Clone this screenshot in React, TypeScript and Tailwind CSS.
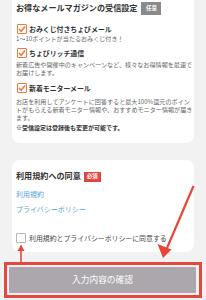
import React from "react";

const font = { fontFamily: '"Noto Sans CJK JP", "Noto Sans", sans-serif' };

function OrangeCheck() {
  return (
    <span className="flex h-[10px] w-[10px] shrink-0 items-center justify-center rounded-[1px] border border-[#f0783c] bg-white">
      <svg width="8" height="8" viewBox="0 0 8 8">
        <polyline points="1,4 3.2,6.2 7,1.6" fill="none" stroke="#f0783c" strokeWidth="1.6" />
      </svg>
    </span>
  );
}

function MailItem({ label, lines, top, gap }: { label: string; lines: string[]; top: string; gap: string }) {
  return (
    <div>
      <div className={`ml-[1px] flex h-[10px] items-center gap-[2px] ${top}`}>
        <OrangeCheck />
        <span className="text-[6.9px] font-bold leading-none text-[#333]">{label}</span>
      </div>
      <p className={`${gap} text-[6.1px] leading-[8px] text-[#666]`}>
        {lines.map((l, i) => (
          <span key={i} className="block whitespace-nowrap">
            {l}
          </span>
        ))}
      </p>
    </div>
  );
}

export default function App() {
  return (
    <div className="relative h-[300px] w-[206px] overflow-hidden bg-[#f2f2f2]" style={font}>
      {/* mail magazine card */}
      <section className="mx-[12px] rounded-b-[8px] bg-white px-[4px] pb-[11px] pt-[2px]">
        <div className="flex h-[13px] items-center gap-[4px]">
          <h2 className="text-[8.1px] font-bold leading-none text-[#333]">お得なメールマガジンの受信設定</h2>
          <span className="flex h-[13px] w-[20px] items-center justify-center bg-[#8a8a8a] text-[5.5px] font-bold text-white">
            任意
          </span>
        </div>
        <MailItem
          top="mt-[9px]"
          gap="mt-[1px]"
          label="おみくじ付きちょびメール"
          lines={["1～10ポイントが当たるおみくじ付き！"]}
        />
        <MailItem
          top="mt-[5px]"
          gap="mt-[3px]"
          label="ちょびリッチ通信"
          lines={["新着広告や開催中のキャンペーンなど、様々なお得情報を最速で", "お届けします。"]}
        />
        <MailItem
          top="mt-[6px]"
          gap="mt-[5px]"
          label="新着モニターメール"
          lines={[
            "お店を利用してアンケートに回答すると最大100%還元のポイン",
            "トがもらえる新着モニター情報や、おすすめモニター情報が届き",
            "ます。",
          ]}
        />
        <p className="mt-[2px] text-[6px] font-bold leading-[8px] text-[#333]">※受信設定は登録後も変更が可能です。</p>
      </section>

      {/* terms card */}
      <section className="mx-[12px] mt-[17px] rounded-[8px] bg-white px-[4px] pb-[9px] pt-[11px]">
        <div className="flex h-[11px] items-center gap-[3px]">
          <h2 className="text-[8.1px] font-bold leading-none text-[#333]">利用規約への同意</h2>
          <span className="flex h-[10px] w-[17px] items-center justify-center bg-[#e8423f] text-[5.5px] font-bold text-white">
            必須
          </span>
        </div>
        <a className="mt-[8px] block text-[7px] leading-[9px] text-[#5a9fd6]">利用規約</a>
        <a className="mt-[6px] block text-[7px] leading-[9px] text-[#5a9fd6]">プライバシーポリシー</a>
        <label className="mt-[19px] flex h-[10px] items-center gap-[3px]">
          <span className="h-[10px] w-[10px] shrink-0 rounded-[1px] border border-[#b5b5b5] bg-white" />
          <span className="text-[6.9px] leading-none text-[#444]">利用規約とプライバシーポリシーに同意する</span>
        </label>
      </section>

      {/* submit */}
      <button
        type="button"
        className="mx-[8px] mt-[14px] flex h-[28px] w-[189px] items-center justify-center rounded-[2px] border border-[#f4f0f2] bg-[#aba7ac] text-[8.7px] text-white"
      >
        入力内容の確認
      </button>

      {/* annotations */}
      <div className="pointer-events-none absolute left-[4px] top-[262px] h-[36px] w-[198px] border-[3px] border-[#e34a3b]" />
      <svg className="pointer-events-none absolute left-0 top-0" width="206" height="300" viewBox="0 0 206 300">
        <line x1="193.5" y1="186" x2="167" y2="248" stroke="#e6463a" strokeWidth="2.2" />
        <polygon points="163,258 157.5,244 171.5,249.5" fill="#e6463a" />
        <line x1="21" y1="263" x2="21" y2="249" stroke="#e6463a" strokeWidth="1.6" />
        <polygon points="21,244.5 17.5,251 24.5,251" fill="#e6463a" />
      </svg>
    </div>
  );
}
